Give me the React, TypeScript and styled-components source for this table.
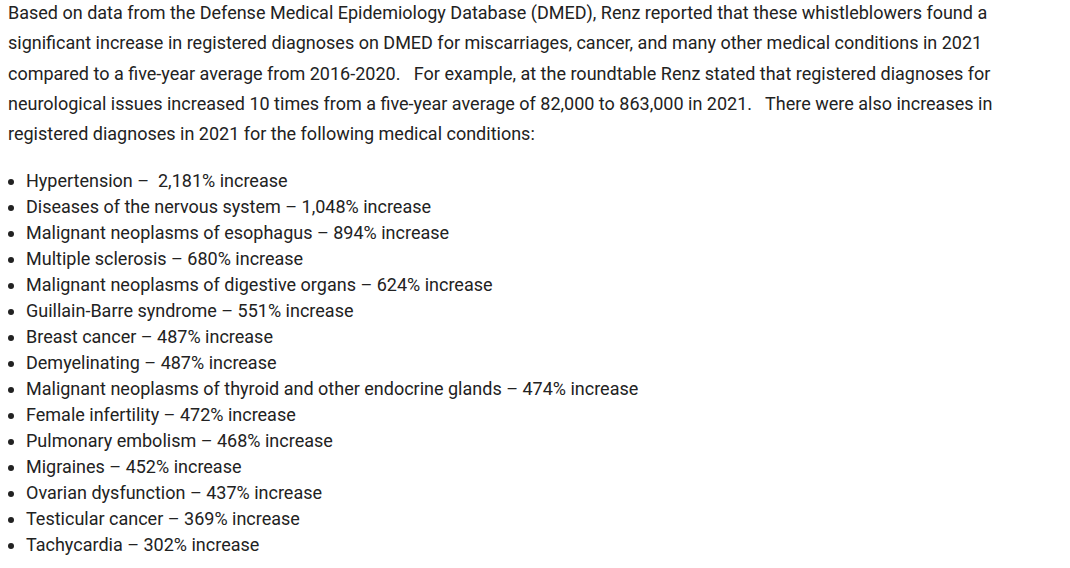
import * as React from "react";
import styled, { createGlobalStyle } from "styled-components";

const GlobalStyle = createGlobalStyle`
  html, body {
    margin: 0;
    padding: 0;
    background: #ffffff;
  }
  body {
    font-family: Roboto, "Liberation Sans", sans-serif;
    color: #222222;
  }
`;

const Article = styled.div`
  width: 1000px;
  padding: 0 8px;
  font-size: 18px;
`;

const Paragraph = styled.p`
  margin: -2px 0 0;
  line-height: 30.25px;
`;

const List = styled.ul`
  margin: 19px 0 0;
  padding: 0 0 0 18px;
  line-height: 25.95px;
`;

const Item = styled.li`
  padding-left: 0;
`;

const conditions: [string, string][] = [
  ["Hypertension", "\u00a0 2,181%"],
  ["Diseases of the nervous system", " 1,048%"],
  ["Malignant neoplasms of esophagus", " 894%"],
  ["Multiple sclerosis", " 680%"],
  ["Malignant neoplasms of digestive organs", " 624%"],
  ["Guillain-Barre syndrome", " 551%"],
  ["Breast cancer", " 487%"],
  ["Demyelinating", " 487%"],
  ["Malignant neoplasms of thyroid and other endocrine glands", " 474%"],
  ["Female infertility", " 472%"],
  ["Pulmonary embolism", " 468%"],
  ["Migraines", " 452%"],
  ["Ovarian dysfunction", " 437%"],
  ["Testicular cancer", " 369%"],
  ["Tachycardia", " 302%"],
];

const App: React.FC = () => {
  return (
    <>
      <GlobalStyle />
      <Article>
        <Paragraph>
          Based on data from the Defense Medical Epidemiology Database (DMED),
          Renz reported that these whistleblowers found a significant increase
          in registered diagnoses on DMED for miscarriages, cancer, and many
          other medical conditions in 2021 compared to a five-year average from
          2016-2020.{"\u00a0\u00a0 "}For example, at the roundtable Renz stated
          that registered diagnoses for neurological issues increased 10 times
          from a five-year average of 82,000 to 863,000 in 2021.
          {"\u00a0\u00a0 "}There were also increases in registered diagnoses in
          2021 for the following medical conditions:
        </Paragraph>
        <List>
          {conditions.map(([name, pct]) => (
            <Item key={name}>
              {name} –{pct} increase
            </Item>
          ))}
        </List>
      </Article>
    </>
  );
};

export default App;
